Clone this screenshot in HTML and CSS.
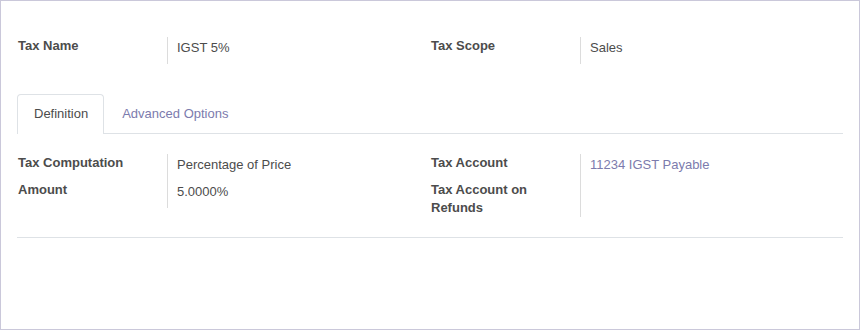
FILE: index.html
```html
<!DOCTYPE html>
<html lang="en">
<head>
    <meta charset="UTF-8">
    <title>Tax</title>
    <link rel="stylesheet" href="styles.css">
</head>
<body>
    <div class="sheet">
        <div class="groups">
            <div class="group">
                <div class="label">Tax Name</div>
                <div class="value">IGST 5%</div>
            </div>
            <div class="group">
                <div class="label">Tax Scope</div>
                <div class="value">Sales</div>
            </div>
        </div>

        <ul class="tabs">
            <li class="tab active">Definition</li>
            <li class="tab">Advanced Options</li>
        </ul>

        <div class="pane">
            <div class="groups">
                <div class="group">
                    <div class="label">Tax Computation</div>
                    <div class="value">Percentage of Price</div>
                    <div class="label">Amount</div>
                    <div class="value">5.0000%</div>
                </div>
                <div class="group">
                    <div class="label">Tax Account</div>
                    <div class="value"><a class="link" href="#">11234 IGST Payable</a></div>
                    <div class="label">Tax Account on<br>Refunds</div>
                    <div class="value"></div>
                </div>
            </div>
        </div>
    </div>
</body>
</html>
```
FILE: styles.css
```css
*{
    margin: 0;
    padding: 0;
    box-sizing: border-box;
    list-style: none;
}
body{
    background-color: #fff;
    font-family: "Liberation Sans", Arial, sans-serif;
    font-size: 13px;
    color: #4c4c4c;
}
.sheet{
    width: 860px;
    height: 330px;
    border: 1px solid #cac8da;
    padding: 36px 16px 0 16px;
}
.groups{
    display: grid;
    grid-template-columns: 413px 413px;
}
.group{
    display: grid;
    grid-template-columns: 150px 1fr;
    align-content: start;
}
.label{
    font-weight: bold;
    line-height: 18px;
    padding-left: 1px;
}
.value{
    border-left: 1px solid #dcdcdc;
    padding: 1px 0 6px 9px;
    line-height: 20px;
}
.link{
    color: #7c7bad;
    text-decoration: none;
}
.tabs{
    display: flex;
    margin-top: 30px;
    border-bottom: 1px solid #dee2e6;
}
.tab{
    padding: 9px 16px 9px 16px;
    line-height: 20px;
    color: #7c7bad;
    border: 1px solid transparent;
    border-bottom: 0;
    border-radius: 4px 4px 0 0;
}
.tab.active{
    color: #4c4c4c;
    border-color: #dee2e6;
    background-color: #fff;
    margin-bottom: -1px;
    padding: 9px 15px 10px 16px;
    margin-right: 1px;
}
.pane{
    padding-top: 20px;
    padding-bottom: 20px;
    border-bottom: 1px solid #dee2e6;
}
```
